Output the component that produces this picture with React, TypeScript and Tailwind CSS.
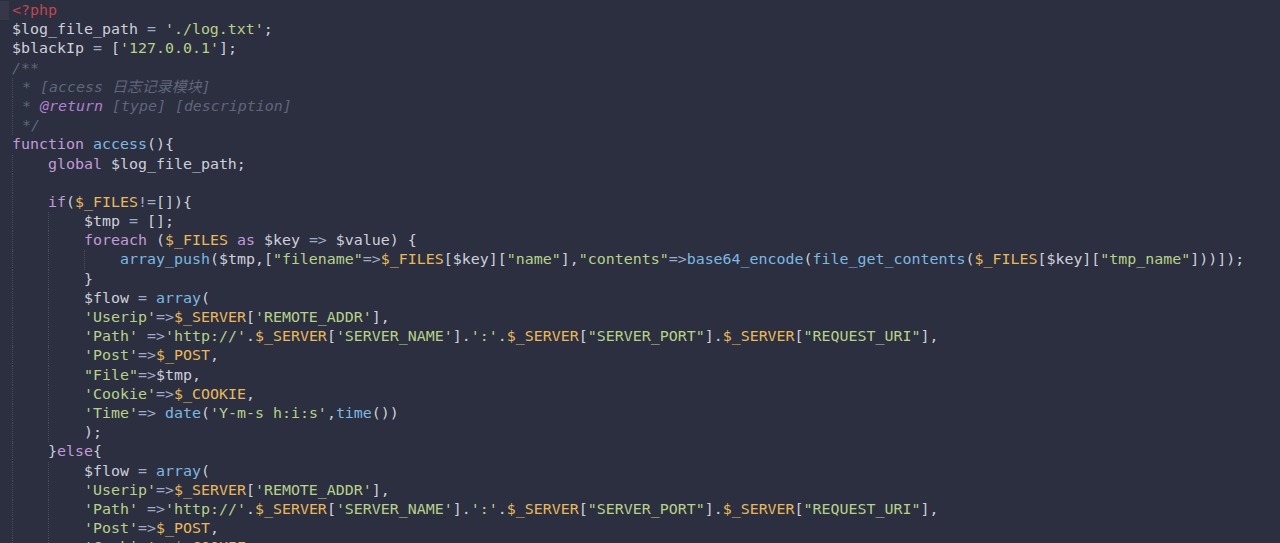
import React from "react";

type Tok = [string, string];

const C: Record<string, string> = {
  t: "text-[#cdd0da]",
  k: "text-[#c39ad8]",
  f: "text-[#7db8e0]",
  s: "text-[#b8d189]",
  g: "text-[#e8b85c]",
  c: "text-[#60657b] italic",
  o: "text-[#a3aac8]",
  tag: "text-[#c0474f]",
  at: "text-[#b27fd0] italic",
};

const L = (indent: number, ...toks: Tok[]) => ({ indent, toks });

const flowBlock = (withFile: boolean) => [
  L(2, ["t", "$flow "], ["o", "="], ["t", " "], ["f", "array"], ["t", "("]),
  L(2, ["s", "'Userip'"], ["o", "=>"], ["g", "$_SERVER"], ["t", "["], ["s", "'REMOTE_ADDR'"], ["t", "],"]),
  L(
    2,
    ["s", "'Path'"],
    ["t", " "],
    ["o", "=>"],
    ["s", "'http://'"],
    ["t", "."],
    ["g", "$_SERVER"],
    ["t", "["],
    ["s", "'SERVER_NAME'"],
    ["t", "]."],
    ["s", "':'"],
    ["t", "."],
    ["g", "$_SERVER"],
    ["t", "["],
    ["s", '"SERVER_PORT"'],
    ["t", "]."],
    ["g", "$_SERVER"],
    ["t", "["],
    ["s", '"REQUEST_URI"'],
    ["t", "],"]
  ),
  L(2, ["s", "'Post'"], ["o", "=>"], ["g", "$_POST"], ["t", ","]),
  ...(withFile ? [L(2, ["s", '"File"'], ["o", "=>"], ["t", "$tmp,"])] : []),
  L(2, ["s", "'Cookie'"], ["o", "=>"], ["g", "$_COOKIE"], ["t", ","]),
];

const lines = [
  L(0, ["tag", "<?php"]),
  L(0, ["t", "$log_file_path "], ["o", "="], ["t", " "], ["s", "'./log.txt'"], ["t", ";"]),
  L(0, ["t", "$blackIp "], ["o", "="], ["t", " ["], ["s", "'127.0.0.1'"], ["t", "];"]),
  L(0, ["c", "/**"]),
  L(-1, ["c", " * [access 日志记录模块]"]),
  L(-1, ["c", " * "], ["at", "@return"], ["c", " [type] [description]"]),
  L(-1, ["c", " */"]),
  L(0, ["k", "function"], ["t", " "], ["f", "access"], ["t", "(){"]),
  L(1, ["k", "global"], ["t", " $log_file_path;"]),
  L(1),
  L(1, ["k", "if"], ["t", "("], ["g", "$_FILES"], ["o", "!="], ["t", "[]){"]),
  L(2, ["t", "$tmp "], ["o", "="], ["t", " [];"]),
  L(2, ["k", "foreach"], ["t", " ("], ["g", "$_FILES"], ["t", " "], ["k", "as"], ["t", " $key "], ["o", "=>"], ["t", " $value) {"]),
  L(
    3,
    ["f", "array_push"],
    ["t", "($tmp,["],
    ["s", '"filename"'],
    ["o", "=>"],
    ["g", "$_FILES"],
    ["t", "[$key]["],
    ["s", '"name"'],
    ["t", "],"],
    ["s", '"contents"'],
    ["o", "=>"],
    ["f", "base64_encode"],
    ["t", "("],
    ["f", "file_get_contents"],
    ["t", "("],
    ["g", "$_FILES"],
    ["t", "[$key]["],
    ["s", '"tmp_name"'],
    ["t", "]))]);"]
  ),
  L(2, ["t", "}"]),
  ...flowBlock(true).slice(0, 6),
  L(2, ["s", "'Time'"], ["o", "=>"], ["t", " "], ["f", "date"], ["t", "("], ["s", "'Y-m-s h:i:s'"], ["t", ","], ["f", "time"], ["t", "())"]),
  L(2, ["t", ");"]),
  L(1, ["t", "}"], ["k", "else"], ["t", "{"]),
  ...flowBlock(false),
];

function Line({ indent, toks, first }: { indent: number; toks: Tok[]; first: boolean }) {
  const guides = indent === -1 ? 1 : indent;
  return (
    <div className="flex h-[19.2px] leading-[19.2px] whitespace-pre">
      <div className="w-[12px] shrink-0">
        {first ? <div className="h-full w-[9px] bg-[#363849]" /> : null}
      </div>
      <div className="flex h-full">
        {Array.from({ length: guides }).map((_, i) => (
          <span
            key={i}
            className={`inline-block h-full border-l border-dotted border-[#474b5e] ${
              indent === -1 ? "w-0" : "w-[36px]"
            }`}
          />
        ))}
        <span>
          {toks.map(([k, s], i) => (
            <span key={i} className={C[k]}>
              {s}
            </span>
          ))}
        </span>
      </div>
    </div>
  );
}

export default function App() {
  return (
    <div
      className="w-[1280px] h-[543px] overflow-hidden bg-[#2b2f40] pt-[1px] text-[14.95px] text-[#cdd0da]"
      style={{ fontFamily: '"DejaVu Sans Mono", "Noto Sans CJK SC", monospace' }}
    >
      {lines.map((l, i) => (
        <Line key={i} indent={l.indent} toks={l.toks} first={i === 0} />
      ))}
    </div>
  );
}
